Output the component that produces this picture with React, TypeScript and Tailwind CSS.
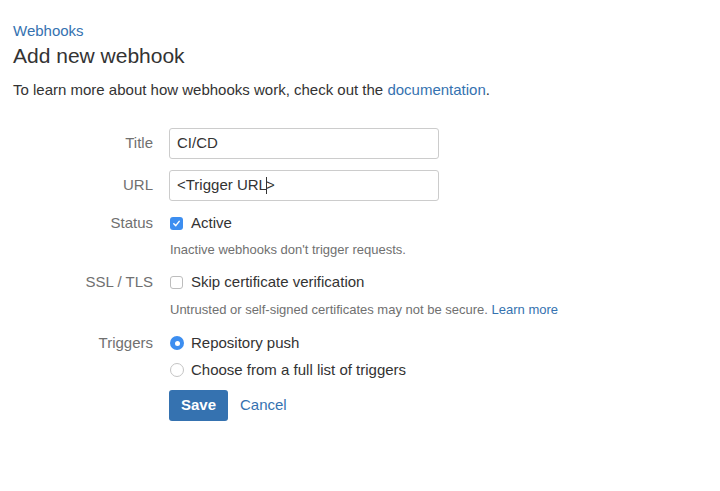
export default function App() {
  return (
    <div
      className="min-h-screen bg-white px-[13px] pt-[21px] text-[15px] text-[#333]"
      style={{ fontFamily: '"Liberation Sans", Arial, sans-serif' }}
    >
      <a className="block leading-[20px] text-[#3572b0]">Webhooks</a>
      <h1 className="mt-[2px] text-[21px] leading-[26px] font-normal">Add new webhook</h1>
      <p className="mt-[11px] leading-[20px]">
        To learn more about how webhooks work, check out the{" "}
        <a className="text-[#3572b0]">documentation</a>.
      </p>

      <div className="mt-[28px] flex flex-col">
        {/* Title */}
        <div className="flex items-center">
          <label className="w-[140px] text-right text-[#707070]">Title</label>
          <div className="ml-[16px] flex h-[31px] w-[270px] items-center rounded-[3px] border border-[#ccc] px-[7px]">
            CI/CD
          </div>
        </div>

        {/* URL */}
        <div className="mt-[11px] flex items-center">
          <label className="w-[140px] text-right text-[#707070]">URL</label>
          <div className="ml-[16px] flex h-[31px] w-[270px] items-center rounded-[3px] border border-[#ccc] px-[7px]">
            {"<Trigger URL"}
            <span className="mx-[-1px] inline-block h-[17px] w-px bg-[#333]" />
            {">"}
          </div>
        </div>

        {/* Status */}
        <div className="mt-[12px] flex h-[20px] items-center">
          <label className="w-[140px] text-right text-[#707070]">Status</label>
          <div className="ml-[17px] flex items-center">
            <span className="flex h-[13px] w-[13px] items-center justify-center rounded-[3px] bg-[#3d8ef0]">
              <svg width="9" height="9" viewBox="0 0 10 10" fill="none">
                <path d="M2 5.2 L4.2 7.4 L8 2.6" stroke="white" strokeWidth="1.6" strokeLinecap="round" strokeLinejoin="round" />
              </svg>
            </span>
            <span className="ml-[8px]">Active</span>
          </div>
        </div>
        <div className="mt-[8px] ml-[157px] text-[13px] leading-[18px] text-[#707070]">
          Inactive webhooks don't trigger requests.
        </div>

        {/* SSL / TLS */}
        <div className="mt-[13px] flex h-[20px] items-center">
          <label className="w-[140px] text-right text-[#707070]">SSL / TLS</label>
          <div className="ml-[17px] flex items-center">
            <span className="h-[13px] w-[13px] rounded-[3px] border border-[#bdbdbd] bg-white" />
            <span className="ml-[8px]">Skip certificate verification</span>
          </div>
        </div>
        <div className="mt-[9px] ml-[157px] text-[13px] leading-[18px] text-[#707070]">
          Untrusted or self-signed certificates may not be secure.{" "}
          <a className="text-[#3572b0]">Learn more</a>
        </div>

        {/* Triggers */}
        <div className="mt-[14px] flex h-[20px] items-center">
          <label className="w-[140px] text-right text-[#707070]">Triggers</label>
          <div className="ml-[17px] flex items-center">
            <span className="flex h-[14px] w-[14px] items-center justify-center rounded-full bg-[#3d8ef0]">
              <span className="h-[5px] w-[5px] rounded-full bg-white" />
            </span>
            <span className="ml-[7px]">Repository push</span>
          </div>
        </div>
        <div className="mt-[7px] ml-[157px] flex h-[20px] items-center">
          <span className="h-[14px] w-[14px] rounded-full border border-[#c4c4c4] bg-white" />
          <span className="ml-[7px]">Choose from a full list of triggers</span>
        </div>

        {/* Actions */}
        <div className="mt-[10px] ml-[156px] flex items-center">
          <button className="h-[31px] w-[59px] rounded-[3px] bg-[#3572b0] text-[15px] font-bold text-white">
            Save
          </button>
          <a className="ml-[12px] text-[#3572b0]">Cancel</a>
        </div>
      </div>
    </div>
  );
}
